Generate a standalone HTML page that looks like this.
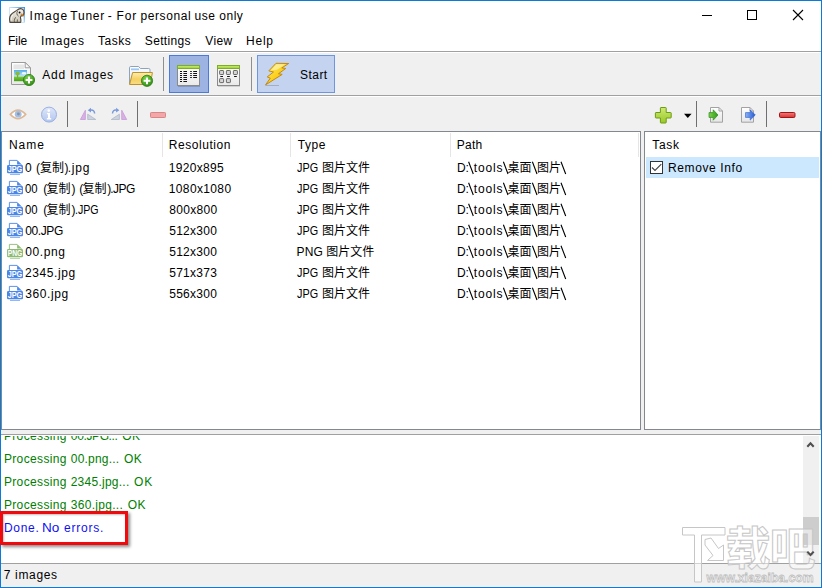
<!DOCTYPE html>
<html lang="en"><head><meta charset="utf-8"><title>Image Tuner - For personal use only</title>
<style>
*{box-sizing:border-box;margin:0;padding:0}
html,body{width:822px;height:588px;overflow:hidden;background:#fff}
body{position:relative;font-family:"Liberation Sans",sans-serif;font-size:12px;color:#000}
.abs,.t,.cj,.ic{position:absolute}
.t{white-space:pre;line-height:16px;height:16px;transform-origin:0 0}
.ck{font-family:"Liberation Sans","Noto Sans CJK SC",sans-serif;font-size:12px}
.cj{overflow:visible}
#win{position:absolute;left:0;top:0;width:822px;height:588px;border:1px solid #0c7ad8;background:#fff;overflow:hidden}
#tb1{left:1px;top:51px;width:820px;height:44px;background:#f0f0f0;border-top:1px solid #a0a0a0;box-shadow:inset 0 1px 0 #fff}
#tb2{left:1px;top:95px;width:820px;height:36px;background:#f0f0f0;border-top:1px solid #a0a0a0;box-shadow:inset 0 1px 0 #fff}
#mid{left:1px;top:131px;width:820px;height:303px;background:#f0f0f0}
#list{left:1px;top:131px;width:640px;height:299px;background:#fff;border:1px solid #828790}
#task{left:644px;top:131px;width:177px;height:299px;background:#fff;border:1px solid #828790}
#log{left:1px;top:434px;width:820px;height:130px;background:#fff;border-top:1px solid #a0a0a0;border-bottom:1px solid #a0a0a0;overflow:hidden}
#status{left:1px;top:564px;width:820px;height:23px;background:#f0f0f0}
.sep{position:absolute;width:1px;background:#8d8d8d}
.hsep{position:absolute;width:1px;top:133px;height:24px;background:#e5e5e5}
.btn{position:absolute;border:1px solid #5a86dc}
</style></head><body>
<div id="win"></div>
<div id="titlebar"><svg class="ic" style="left:9px;top:7px" width="16" height="16" viewBox="0 0 16 16"><defs><linearGradient id="tg1" x1="0" y1="0" x2="1" y2="0"><stop offset="0" stop-color="#cfe6fa"/><stop offset="1" stop-color="#3d92e4"/></linearGradient><linearGradient id="tg2" x1="0" y1="0" x2="0" y2="1"><stop offset="0" stop-color="#3d92e4"/><stop offset="1" stop-color="#bcdcf8"/></linearGradient><linearGradient id="eb" x1="0" y1="0" x2="0" y2="1"><stop offset="0" stop-color="#f3f1ea"/><stop offset="1" stop-color="#c9c3b4"/></linearGradient></defs><rect width="16" height="16" fill="#fff"/><rect width="16" height="1" fill="url(#tg1)"/><rect x="14.600" width="1.400" height="16" fill="url(#tg2)"/><rect width="1" height="16" fill="#cfe6fa"/><rect y="15" width="16" height="1" fill="#cfe6fa"/><path d="M1 15.300C.3 12.400.5 9.600 1.800 7.800C3.400 5.600 6 4.800 7.800 3.400C9.400 1.800 11.600 1.300 13.200 2C14.800 2.800 15.200 5 14.800 7L14.200 8.600L12 8.900L11.400 10.600C11.900 12.200 12 14 11.600 15.300Z" fill="url(#eb)" stroke="#4e463c" stroke-width="1.150" stroke-linejoin="round"/><path d="M5.400 15C5.100 12.800 5.600 11.200 7 10.200M8.300 15L8.400 12.400M8.600 4C7.400 5.600 7.600 8.200 9.600 9.200" fill="none" stroke="#5e564a" stroke-width=".9"/><path d="M2.200 13.600C1.900 11 2.600 9.200 4 7.900" fill="none" stroke="#fff" stroke-width="1" opacity=".8"/><circle cx="10.600" cy="5.500" r=".95" fill="#0a0a0a"/><path d="M11.700 7.400L14.700 9L14.400 7.700L12.500 6.800Z" fill="#e2871a" stroke="#cf7710" stroke-width=".4"/></svg><div id="title"><span class="t" style="left:29.59px;top:7.84px;letter-spacing:1.045px;">Image</span> <span class="t" style="left:70.33px;top:7.84px;letter-spacing:0.766px;">Tuner</span> <span class="t" style="left:107.77px;top:7.84px;">-</span> <span class="t" style="left:116.52px;top:7.84px;letter-spacing:0.842px;">For</span> <span class="t" style="left:140.53px;top:7.84px;letter-spacing:0.578px;">personal</span> <span class="t" style="left:194.52px;top:7.84px;letter-spacing:0.477px;">use</span> <span class="t" style="left:219.30px;top:7.84px;letter-spacing:0.504px;">only</span> </div><svg class="ic" style="left:696px;top:4px" width="116" height="22" viewBox="696 4 116 22" shape-rendering="crispEdges"><rect x="702" y="15" width="10" height="1" fill="#000"/><rect x="747.5" y="10.5" width="9" height="9" fill="none" stroke="#000"/><path d="M793 10 L803 20 M803 10 L793 20" stroke="#000" stroke-width="1.1" shape-rendering="geometricPrecision"/></svg></div>
<div id="menubar"><span class="t" style="left:7.92px;top:32.84px;letter-spacing:-0.009px;">File</span><span class="t" style="left:41.09px;top:32.84px;letter-spacing:0.696px;">Images</span><span class="t" style="left:97.93px;top:32.84px;letter-spacing:0.529px;">Tasks</span><span class="t" style="left:144.86px;top:32.84px;letter-spacing:0.317px;">Settings</span><span class="t" style="left:205.35px;top:32.84px;letter-spacing:0.376px;">View</span><span class="t" style="left:246.02px;top:32.84px;letter-spacing:0.767px;">Help</span></div>
<div id="tb1" class="abs"></div><svg class="ic" style="left:0;top:52px" width="822" height="44" viewBox="0 52 822 44"><defs>
<linearGradient id="pg" x1="0" y1="0" x2="0" y2="1"><stop offset="0" stop-color="#ffffff"/><stop offset="1" stop-color="#e9e9e9"/></linearGradient>
<linearGradient id="sky" x1="0" y1="0" x2="0" y2="1"><stop offset="0" stop-color="#52aeec"/><stop offset="1" stop-color="#d2ecfb"/></linearGradient>
<linearGradient id="grs" x1="0" y1="0" x2="0" y2="1"><stop offset="0" stop-color="#7ccb34"/><stop offset="1" stop-color="#45a018"/></linearGradient>
<radialGradient id="gc" cx=".4" cy=".3" r=".8"><stop offset="0" stop-color="#7ad548"/><stop offset="1" stop-color="#2a8410"/></radialGradient>
<linearGradient id="fb" x1="0" y1="0" x2="0" y2="1"><stop offset="0" stop-color="#ffffff"/><stop offset="1" stop-color="#d6e3f4"/></linearGradient>
<linearGradient id="ff" x1="0" y1="0" x2="0" y2="1"><stop offset="0" stop-color="#fdeeb8"/><stop offset=".55" stop-color="#f6d060"/><stop offset="1" stop-color="#f8dc88"/></linearGradient>
<linearGradient id="gb" x1="0" y1="0" x2="0" y2="1"><stop offset="0" stop-color="#c4ea68"/><stop offset="1" stop-color="#a4d438"/></linearGradient>
<linearGradient id="lt" x1="0" y1="0" x2="1" y2="1"><stop offset="0" stop-color="#fff47a"/><stop offset=".5" stop-color="#fbd020"/><stop offset="1" stop-color="#f0a800"/></linearGradient>
</defs>
<!-- add images -->
<path d="M11.5 62.5H25.2L30.5 67.8V84.5H11.5Z" fill="url(#pg)" stroke="#9b9b9b"/>
<path d="M25.2 62.5V67.8H30.5Z" fill="#fafafa" stroke="#9b9b9b" stroke-linejoin="round"/>
<rect x="13.5" y="64.5" width="10.5" height="4.5" fill="#e6e6e6"/>
<rect x="14" y="70" width="13" height="7.4" fill="url(#sky)"/>
<rect x="14" y="76.6" width="13" height="4.6" fill="url(#grs)"/>
<ellipse cx="24" cy="73.2" rx="2.4" ry="1.2" fill="#fff" opacity=".85"/>
<ellipse cx="17.6" cy="73.6" rx="2.3" ry="2" fill="#86bc3a"/><rect x="17.3" y="75" width=".8" height="2.4" fill="#7a8a30"/>
<circle cx="29" cy="80" r="5.6" fill="url(#gc)" stroke="#2c7a14" stroke-width=".8"/>
<path d="M28 76.6h2v2.4h2.4v2h-2.4v2.4h-2v-2.4h-2.4v-2h2.4z" fill="#fff"/>
<!-- add folder -->
<path d="M129.5 84V67.8Q129.5 66.5 130.8 66.5H138.6L140.4 68.5H148.7Q150 68.5 150 69.8V84Z" fill="url(#fb)" stroke="#8ea2bb"/>
<rect x="131" y="68.4" width="8" height="1.8" fill="#9cc8f6"/>
<path d="M132.6 72.5H152.4L150.4 84.5H129.6Z" fill="url(#ff)" stroke="#bd9226" stroke-linejoin="round"/>
<circle cx="147" cy="80.8" r="5.6" fill="url(#gc)" stroke="#2c7a14" stroke-width=".8"/>
<path d="M146 77.4h2v2.4h2.4v2h-2.4v2.4h-2v-2.4h-2.4v-2h2.4z" fill="#fff"/>
<rect x="163" y="57" width="1" height="34" fill="#8f8f8f"/>
<!-- details (selected) -->
<rect x="169.5" y="55.5" width="39" height="37" fill="#9db4e3" stroke="#4a7bdb"/>
<rect x="178" y="85.6" width="22" height="1" fill="#000" opacity=".28"/>
<rect x="177.5" y="65.5" width="22" height="20" fill="url(#pg)" stroke="#8a8a8a"/>
<rect x="177" y="65" width="23" height="4" rx=".8" fill="#7fae22"/><rect x="178" y="66" width="21" height="2" fill="url(#gb)"/>
<path d="M180 71.5h2m1.4 0h3.6M180 73.5h2m1.4 0h3.6M180 75.5h2m1.4 0h3.6M180 77.5h2m1.4 0h3.6M180 79.5h2m1.4 0h3.6M180 81.5h2m1.4 0h3.6M190.2 71.5h1.6m1.4 0h3.8M190.2 73.5h1.6m1.4 0h3.8M190.2 75.5h1.6m1.4 0h3.8M190.2 77.5h1.6m1.4 0h3.8" stroke="#111" stroke-width="1"/>
<!-- thumbnails -->
<rect x="218" y="85.6" width="22" height="1" fill="#000" opacity=".22"/>
<rect x="217.5" y="65.5" width="22" height="20" fill="url(#pg)" stroke="#8a8a8a"/>
<rect x="217" y="65" width="23" height="4" rx=".8" fill="#7fae22"/><rect x="218" y="66" width="21" height="2" fill="url(#gb)"/>
<g fill="#d6d6d6" stroke="#6a6a6a"><rect x="219.6" y="70.5" width="4" height="4" rx=".6"/><rect x="226.4" y="70.5" width="4" height="4" rx=".6"/><rect x="233.4" y="70.5" width="4" height="4" rx=".6"/><rect x="219.6" y="78.6" width="4" height="4" rx=".6"/><rect x="226.4" y="78.6" width="4" height="4" rx=".6"/></g>
<path d="M220.3 76.5h2.7M227.1 76.5h2.7M234.1 76.5h2.7" stroke="#111"/>
<rect x="251" y="57" width="1" height="34" fill="#8f8f8f"/>
<!-- start -->
<rect x="257.5" y="55.5" width="77" height="37" fill="#c4d3ef" stroke="#6c96e0"/>
<path d="M265.6 85.6H279" stroke="#8a8a8a" stroke-width=".8" opacity=".7"/>
<path d="M276 63.300L288.700 63.500L281.800 67.900L285.700 68.500L278.500 73.700L282.200 74.400L265.500 84.900L270.300 78.200L267.200 76.900L273.500 72L268.800 70.900Z" fill="url(#lt)" stroke="#c48a10" stroke-width="1" stroke-linejoin="round"/><path d="M276.600 64.300H285.500L277 69.800L271 70.300Z" fill="#fffbd0" opacity=".55"/>
</svg>
<span class="t" style="left:42.28px;top:66.84px;letter-spacing:0.757px;">Add Images</span><span class="t" style="left:299.96px;top:66.84px;letter-spacing:0.472px;">Start</span>
<div id="tb2" class="abs"></div><svg class="ic" style="left:0;top:96px" width="822" height="36" viewBox="0 96 822 36"><defs>
<linearGradient id="ig" x1="0" y1="0" x2="0" y2="1"><stop offset="0" stop-color="#e0e8f9"/><stop offset="1" stop-color="#b2c5ee"/></linearGradient>
<linearGradient id="gp" x1="0" y1="0" x2="0" y2="1"><stop offset="0" stop-color="#cdea74"/><stop offset="1" stop-color="#98c828"/></linearGradient>
<linearGradient id="ga" x1="0" y1="0" x2="1" y2="0"><stop offset="0" stop-color="#7fd24a"/><stop offset="1" stop-color="#2d9a1c"/></linearGradient>
<linearGradient id="ba" x1="0" y1="0" x2="1" y2="0"><stop offset="0" stop-color="#8ab4f6"/><stop offset="1" stop-color="#2456d2"/></linearGradient>
<linearGradient id="rm" x1="0" y1="0" x2="0" y2="1"><stop offset="0" stop-color="#f47c7c"/><stop offset="1" stop-color="#d63434"/></linearGradient>
<linearGradient id="pg2" x1="0" y1="0" x2="0" y2="1"><stop offset="0" stop-color="#ffffff"/><stop offset="1" stop-color="#e6e6e6"/></linearGradient>
</defs>
<!-- eye -->
<path d="M10.3 114.4Q18 105.8 25.7 114.4Q18 122.8 10.3 114.4Z" fill="#fff" stroke="#ddb896" stroke-width="1.6"/>
<circle cx="18.2" cy="114.2" r="3.4" fill="#a2bfe6"/><circle cx="18.4" cy="114" r="1.4" fill="#8a93a6"/>
<!-- info -->
<circle cx="49" cy="114.6" r="7.5" fill="url(#ig)" stroke="#9bb1e2"/>
<circle cx="48.8" cy="110.6" r="1.3" fill="#fff"/><path d="M47 113H50V118H51.2V119.4H46.8V118H48V114.3H47Z" fill="#fff"/>
<rect x="67" y="101" width="1" height="26" fill="#6f6f6f"/>
<!-- flip L -->
<path d="M80.400 119.500H85.400V110.200Z" fill="#d9afe6" stroke="#c79ad8" stroke-width=".8"/><path d="M87.700 119.500H95.800L87.700 114.200Z" fill="#cbd3de" stroke="#aeb8c8" stroke-width=".8"/>
<path d="M94.6 113.6Q94.6 109.6 90.4 110.2" fill="none" stroke="#7a9adc" stroke-width="1.5"/><path d="M87.8 110.2L91 107.8V112.6Z" fill="#7a9adc"/>
<!-- flip R -->
<path d="M126.700 119.500H121.700V110.200Z" fill="#d9afe6" stroke="#c79ad8" stroke-width=".8"/><path d="M119.400 119.500H111.300L119.400 114.200Z" fill="#cbd3de" stroke="#aeb8c8" stroke-width=".8"/>
<path d="M112.5 113.6Q112.5 109.6 116.7 110.2" fill="none" stroke="#7a9adc" stroke-width="1.5"/><path d="M119.3 110.2L116.1 107.8V112.6Z" fill="#7a9adc"/>
<rect x="137" y="101" width="1" height="26" fill="#6f6f6f"/>
<rect x="150.5" y="112.5" width="15" height="5" rx=".8" fill="#f2a8a8" stroke="#d98686"/>
<!-- right group -->
<path d="M661 107.5h4.6q.6 0 .6.6v4.4h4.4q.6 0 .6.6v4.3q0 .6-.6.6h-4.4v4.4q0 .6-.6.6h-4.6q-.6 0-.6-.6v-4.4h-4.4q-.6 0-.6-.6v-4.3q0-.6.6-.6h4.400v-4.400q0-.6.6-.6z" fill="url(#gp)" stroke="#6c9c10"/>
<path d="M684 113.8h7.6l-3.800 4.200z" fill="#000"/>
<rect x="696" y="101" width="1" height="26" fill="#6f6f6f"/>
<path d="M710.500 107.500H719L722.500 111V122.200H710.500Z" fill="url(#pg2)" stroke="#a2a2a2"/><path d="M719 107.500V111H722.500" fill="none" stroke="#a2a2a2"/>
<path d="M709 112.600H713.200V109.800L718 115L713.200 120.200V117.400H709Z" fill="url(#ga)" stroke="#2e8c1c" stroke-width=".7"/>
<path d="M741.500 107.500H750L753.500 111V122.200H741.500Z" fill="url(#pg2)" stroke="#a2a2a2"/><path d="M750 107.500V111H753.500" fill="none" stroke="#a2a2a2"/>
<path d="M745.500 112.600H750.200V109.900L755.300 115L750.200 120.100V117.400H745.500Z" fill="url(#ba)" stroke="#2c5cd0" stroke-width=".6"/>
<rect x="766" y="101" width="1" height="26" fill="#6f6f6f"/>
<rect x="779.500" y="112.500" width="15.500" height="5" rx="1.200" fill="url(#rm)" stroke="#a41414"/>
</svg>

<div id="mid" class="abs"></div><div id="list" class="abs"></div><div class="hsep" style="left:162px"></div><div class="hsep" style="left:290px"></div><div class="hsep" style="left:450px"></div><div class="hsep" style="left:638px"></div><span class="t" style="left:8.92px;top:136.84px;letter-spacing:1.001px;">Name</span><span class="t" style="left:168.82px;top:136.84px;letter-spacing:0.551px;">Resolution</span><span class="t" style="left:297.73px;top:136.84px;letter-spacing:0.562px;">Type</span><span class="t" style="left:456.82px;top:136.84px;letter-spacing:0.259px;">Path</span><div class="row"><svg class="ic" style="left:6px;top:159px" width="18" height="16" viewBox="0 0 18 16"><path d="M3.400 6V1.400h7.700l4 4v.600" fill="none" stroke="#4a86e8" stroke-width=".9"/><path d="M4 15.400h10" fill="none" stroke="#4a86e8" stroke-width=".9" opacity=".75"/><path d="M11.100 1.400v4h4z" fill="#4a86e8"/><rect x="1" y="6" width="16" height="8.200" rx="1.300" fill="#4a86e8"/><text x="1.700" y="13.250" font-family="Liberation Sans,sans-serif" font-weight="bold" font-size="8.800" fill="#fff" textLength="14.600" lengthAdjust="spacingAndGlyphs">JPG</text></svg><span class="t" style="left:25.03px;top:159.84px;">0</span><span class="t" style="left:36.06px;top:159.84px;">(</span><span class="t ck" style="left:40.00px;top:159.84px;">复制</span><span class="t" style="left:64.43px;top:159.84px;">)</span><span class="t" style="left:67.70px;top:159.84px;letter-spacing:0.837px;">.jpg</span><span class="t" style="left:168.79px;top:159.84px;letter-spacing:0.328px;">1920x895</span><span class="t" style="left:297.11px;top:159.84px;transform:scaleX(0.9032);">JPG</span><span class="t ck" style="left:322.00px;top:159.84px;">图片文件</span><span class="t" style="left:456.92px;top:159.84px;letter-spacing:-0.120px;">D:</span><span class="t" style="left:473.82px;top:159.84px;letter-spacing:0.864px;">tools</span><span class="t ck" style="left:507.50px;top:159.84px;">桌面</span><span class="t ck" style="left:537.00px;top:159.84px;">图片</span><svg class="ic" style="left:466px;top:161px" width="102" height="14" viewBox="466 0 102 14"><path d="M468.600 .700L473.300 13M503.400 .700L508 13M532.400 .700L537 13M561 .700L565.700 13" fill="none" stroke="#000" stroke-width="1.100"/></svg></div>
<div class="row"><svg class="ic" style="left:6px;top:180px" width="18" height="16" viewBox="0 0 18 16"><path d="M3.400 6V1.400h7.700l4 4v.600" fill="none" stroke="#4a86e8" stroke-width=".9"/><path d="M4 15.400h10" fill="none" stroke="#4a86e8" stroke-width=".9" opacity=".75"/><path d="M11.100 1.400v4h4z" fill="#4a86e8"/><rect x="1" y="6" width="16" height="8.200" rx="1.300" fill="#4a86e8"/><text x="1.700" y="13.250" font-family="Liberation Sans,sans-serif" font-weight="bold" font-size="8.800" fill="#fff" textLength="14.600" lengthAdjust="spacingAndGlyphs">JPG</text></svg><span class="t" style="left:25.13px;top:180.84px;transform:scaleX(0.9460);">00</span><span class="t" style="left:43.16px;top:180.84px;">(</span><span class="t ck" style="left:46.60px;top:180.84px;">复制</span><span class="t" style="left:71.53px;top:180.84px;">)</span><span class="t" style="left:79.36px;top:180.84px;">(</span><span class="t ck" style="left:82.60px;top:180.84px;">复制</span><span class="t" style="left:107.33px;top:180.84px;">)</span><span class="t" style="left:110.20px;top:180.84px;letter-spacing:-0.527px;">.JPG</span><span class="t" style="left:168.79px;top:180.84px;letter-spacing:0.362px;">1080x1080</span><span class="t" style="left:297.11px;top:180.84px;transform:scaleX(0.9032);">JPG</span><span class="t ck" style="left:322.00px;top:180.84px;">图片文件</span><span class="t" style="left:456.92px;top:180.84px;letter-spacing:-0.120px;">D:</span><span class="t" style="left:473.82px;top:180.84px;letter-spacing:0.864px;">tools</span><span class="t ck" style="left:507.50px;top:180.84px;">桌面</span><span class="t ck" style="left:537.00px;top:180.84px;">图片</span><svg class="ic" style="left:466px;top:182px" width="102" height="14" viewBox="466 0 102 14"><path d="M468.600 .700L473.300 13M503.400 .700L508 13M532.400 .700L537 13M561 .700L565.700 13" fill="none" stroke="#000" stroke-width="1.100"/></svg></div>
<div class="row"><svg class="ic" style="left:6px;top:201px" width="18" height="16" viewBox="0 0 18 16"><path d="M3.400 6V1.400h7.700l4 4v.600" fill="none" stroke="#4a86e8" stroke-width=".9"/><path d="M4 15.400h10" fill="none" stroke="#4a86e8" stroke-width=".9" opacity=".75"/><path d="M11.100 1.400v4h4z" fill="#4a86e8"/><rect x="1" y="6" width="16" height="8.200" rx="1.300" fill="#4a86e8"/><text x="1.700" y="13.250" font-family="Liberation Sans,sans-serif" font-weight="bold" font-size="8.800" fill="#fff" textLength="14.600" lengthAdjust="spacingAndGlyphs">JPG</text></svg><span class="t" style="left:25.13px;top:201.84px;transform:scaleX(0.9460);">00</span><span class="t" style="left:43.16px;top:201.84px;">(</span><span class="t ck" style="left:46.60px;top:201.84px;">复制</span><span class="t" style="left:71.53px;top:201.84px;">)</span><span class="t" style="left:75.20px;top:201.84px;transform:scaleX(0.8845);">.JPG</span><span class="t" style="left:169.18px;top:201.84px;letter-spacing:0.341px;">800x800</span><span class="t" style="left:297.11px;top:201.84px;transform:scaleX(0.9032);">JPG</span><span class="t ck" style="left:322.00px;top:201.84px;">图片文件</span><span class="t" style="left:456.92px;top:201.84px;letter-spacing:-0.120px;">D:</span><span class="t" style="left:473.82px;top:201.84px;letter-spacing:0.864px;">tools</span><span class="t ck" style="left:507.50px;top:201.84px;">桌面</span><span class="t ck" style="left:537.00px;top:201.84px;">图片</span><svg class="ic" style="left:466px;top:203px" width="102" height="14" viewBox="466 0 102 14"><path d="M468.600 .700L473.300 13M503.400 .700L508 13M532.400 .700L537 13M561 .700L565.700 13" fill="none" stroke="#000" stroke-width="1.100"/></svg></div>
<div class="row"><svg class="ic" style="left:6px;top:222px" width="18" height="16" viewBox="0 0 18 16"><path d="M3.400 6V1.400h7.700l4 4v.600" fill="none" stroke="#4a86e8" stroke-width=".9"/><path d="M4 15.400h10" fill="none" stroke="#4a86e8" stroke-width=".9" opacity=".75"/><path d="M11.100 1.400v4h4z" fill="#4a86e8"/><rect x="1" y="6" width="16" height="8.200" rx="1.300" fill="#4a86e8"/><text x="1.700" y="13.250" font-family="Liberation Sans,sans-serif" font-weight="bold" font-size="8.800" fill="#fff" textLength="14.600" lengthAdjust="spacingAndGlyphs">JPG</text></svg><span class="t" style="left:25.13px;top:222.84px;letter-spacing:-0.373px;">00.JPG</span><span class="t" style="left:169.22px;top:222.84px;letter-spacing:0.267px;">512x300</span><span class="t" style="left:297.11px;top:222.84px;transform:scaleX(0.9032);">JPG</span><span class="t ck" style="left:322.00px;top:222.84px;">图片文件</span><span class="t" style="left:456.92px;top:222.84px;letter-spacing:-0.120px;">D:</span><span class="t" style="left:473.82px;top:222.84px;letter-spacing:0.864px;">tools</span><span class="t ck" style="left:507.50px;top:222.84px;">桌面</span><span class="t ck" style="left:537.00px;top:222.84px;">图片</span><svg class="ic" style="left:466px;top:224px" width="102" height="14" viewBox="466 0 102 14"><path d="M468.600 .700L473.300 13M503.400 .700L508 13M532.400 .700L537 13M561 .700L565.700 13" fill="none" stroke="#000" stroke-width="1.100"/></svg></div>
<div class="row"><svg class="ic" style="left:6px;top:243px" width="18" height="16" viewBox="0 0 18 16"><path d="M3.400 6V1.400h7.700l4 4v.600" fill="none" stroke="#8dba72" stroke-width=".9"/><path d="M4 15.400h10" fill="none" stroke="#8dba72" stroke-width=".9" opacity=".75"/><path d="M11.100 1.400v4h4z" fill="#8dba72"/><rect x="1" y="6" width="16" height="8.200" rx="1.300" fill="#8dba72"/><text x="1.700" y="13.250" font-family="Liberation Sans,sans-serif" font-weight="bold" font-size="8.800" fill="#fff" textLength="14.600" lengthAdjust="spacingAndGlyphs">PNG</text></svg><span class="t" style="left:25.13px;top:243.84px;letter-spacing:0.628px;">00.png</span><span class="t" style="left:169.22px;top:243.84px;letter-spacing:0.267px;">512x300</span><span class="t" style="left:296.62px;top:243.84px;letter-spacing:0.133px;">PNG</span><span class="t ck" style="left:326.20px;top:243.84px;">图片文件</span><span class="t" style="left:456.92px;top:243.84px;letter-spacing:-0.120px;">D:</span><span class="t" style="left:473.82px;top:243.84px;letter-spacing:0.864px;">tools</span><span class="t ck" style="left:507.50px;top:243.84px;">桌面</span><span class="t ck" style="left:537.00px;top:243.84px;">图片</span><svg class="ic" style="left:466px;top:245px" width="102" height="14" viewBox="466 0 102 14"><path d="M468.600 .700L473.300 13M503.400 .700L508 13M532.400 .700L537 13M561 .700L565.700 13" fill="none" stroke="#000" stroke-width="1.100"/></svg></div>
<div class="row"><svg class="ic" style="left:6px;top:264px" width="18" height="16" viewBox="0 0 18 16"><path d="M3.400 6V1.400h7.700l4 4v.600" fill="none" stroke="#4a86e8" stroke-width=".9"/><path d="M4 15.400h10" fill="none" stroke="#4a86e8" stroke-width=".9" opacity=".75"/><path d="M11.100 1.400v4h4z" fill="#4a86e8"/><rect x="1" y="6" width="16" height="8.200" rx="1.300" fill="#4a86e8"/><text x="1.700" y="13.250" font-family="Liberation Sans,sans-serif" font-weight="bold" font-size="8.800" fill="#fff" textLength="14.600" lengthAdjust="spacingAndGlyphs">JPG</text></svg><span class="t" style="left:25.00px;top:264.84px;letter-spacing:0.604px;">2345.jpg</span><span class="t" style="left:169.22px;top:264.84px;letter-spacing:0.277px;">571x373</span><span class="t" style="left:297.11px;top:264.84px;transform:scaleX(0.9032);">JPG</span><span class="t ck" style="left:322.00px;top:264.84px;">图片文件</span><span class="t" style="left:456.92px;top:264.84px;letter-spacing:-0.120px;">D:</span><span class="t" style="left:473.82px;top:264.84px;letter-spacing:0.864px;">tools</span><span class="t ck" style="left:507.50px;top:264.84px;">桌面</span><span class="t ck" style="left:537.00px;top:264.84px;">图片</span><svg class="ic" style="left:466px;top:266px" width="102" height="14" viewBox="466 0 102 14"><path d="M468.600 .700L473.300 13M503.400 .700L508 13M532.400 .700L537 13M561 .700L565.700 13" fill="none" stroke="#000" stroke-width="1.100"/></svg></div>
<div class="row"><svg class="ic" style="left:6px;top:285px" width="18" height="16" viewBox="0 0 18 16"><path d="M3.400 6V1.400h7.700l4 4v.600" fill="none" stroke="#4a86e8" stroke-width=".9"/><path d="M4 15.400h10" fill="none" stroke="#4a86e8" stroke-width=".9" opacity=".75"/><path d="M11.100 1.400v4h4z" fill="#4a86e8"/><rect x="1" y="6" width="16" height="8.200" rx="1.300" fill="#4a86e8"/><text x="1.700" y="13.250" font-family="Liberation Sans,sans-serif" font-weight="bold" font-size="8.800" fill="#fff" textLength="14.600" lengthAdjust="spacingAndGlyphs">JPG</text></svg><span class="t" style="left:25.14px;top:285.84px;letter-spacing:0.626px;">360.jpg</span><span class="t" style="left:169.22px;top:285.84px;letter-spacing:0.267px;">556x300</span><span class="t" style="left:297.11px;top:285.84px;transform:scaleX(0.9032);">JPG</span><span class="t ck" style="left:322.00px;top:285.84px;">图片文件</span><span class="t" style="left:456.92px;top:285.84px;letter-spacing:-0.120px;">D:</span><span class="t" style="left:473.82px;top:285.84px;letter-spacing:0.864px;">tools</span><span class="t ck" style="left:507.50px;top:285.84px;">桌面</span><span class="t ck" style="left:537.00px;top:285.84px;">图片</span><svg class="ic" style="left:466px;top:287px" width="102" height="14" viewBox="466 0 102 14"><path d="M468.600 .700L473.300 13M503.400 .700L508 13M532.400 .700L537 13M561 .700L565.700 13" fill="none" stroke="#000" stroke-width="1.100"/></svg></div>
<div id="task" class="abs"></div><span class="t" style="left:652.23px;top:136.84px;letter-spacing:0.688px;">Task</span><div class="abs" style="left:646px;top:157px;width:173px;height:21px;background:#cce8ff"></div><svg class="ic" style="left:650px;top:161px" width="13" height="13" viewBox="0 0 13 13"><rect x=".5" y=".5" width="12" height="12" fill="#fff" stroke="#333"/><path d="M2 6.500L5 9.500L11.300 3.200" fill="none" stroke="#444" stroke-width="1.150"/></svg><span class="t" style="left:668.02px;top:159.84px;letter-spacing:0.614px;">Remove Info</span>
<div id="log" class="abs"></div><div class="abs" style="left:1px;top:436px;width:800px;height:127px;overflow:hidden"><div class="abs" style="left:-1px;top:-436px;width:822px;height:588px"><span class="t" style="left:3.92px;top:427.84px;color:#008000;letter-spacing:0.354px;">Processing</span><span class="t" style="left:70.83px;top:427.84px;color:#008000;letter-spacing:-0.371px;">00.JPG...</span><span class="t" style="left:122.33px;top:427.84px;color:#008000;letter-spacing:0.359px;">OK</span><span class="t" style="left:3.92px;top:450.84px;color:#008000;letter-spacing:0.354px;">Processing</span><span class="t" style="left:70.83px;top:450.84px;color:#008000;letter-spacing:0.193px;">00.png...</span><span class="t" style="left:124.03px;top:450.84px;color:#008000;letter-spacing:0.359px;">OK</span><span class="t" style="left:3.92px;top:473.84px;color:#008000;letter-spacing:0.354px;">Processing</span><span class="t" style="left:70.70px;top:473.84px;color:#008000;letter-spacing:0.255px;">2345.jpg...</span><span class="t" style="left:133.93px;top:473.84px;color:#008000;letter-spacing:0.959px;">OK</span><span class="t" style="left:3.92px;top:496.84px;color:#008000;letter-spacing:0.354px;">Processing</span><span class="t" style="left:70.84px;top:496.84px;color:#008000;letter-spacing:0.286px;">360.jpg...</span><span class="t" style="left:127.63px;top:496.84px;color:#008000;letter-spacing:0.459px;">OK</span><span class="t" style="left:3.92px;top:519.84px;color:#1010f0;letter-spacing:0.712px;">Done.</span><span class="t" style="left:42.32px;top:519.84px;color:#1010f0;transform:scaleX(1.1267);">No</span><span class="t" style="left:63.99px;top:519.84px;color:#1010f0;letter-spacing:0.772px;">errors.</span></div></div><div class="abs" style="left:803px;top:436px;width:16px;height:127px;background:#f0f0f0"></div><div class="abs" style="left:803px;top:517px;width:16px;height:28px;background:#cdcdcd"></div>
<div id="status" class="abs"></div><span class="t" style="left:3.68px;top:567.44px;letter-spacing:0.678px;">7 images</span>
<svg class="ic" style="left:676px;top:520px" width="146" height="68" viewBox="676 520 146 68"><g fill="#fff" fill-opacity=".5" stroke="#c6c6c6"><path d="M682.500 527.500H725V535H701.500V582H694.500V535H682.500Z"/><path d="M705 539.500L711 538L718.500 548.500L723.500 545V560.500H707.500L713 555.500L705 545Z"/></g><g fill="#fff" fill-opacity=".5" stroke="#c6c6c6" stroke-width="1" font-family="Liberation Sans,Noto Sans CJK SC,sans-serif" font-weight="bold"><text x="725.500" y="564.500" font-size="45">载</text><text x="769.500" y="564.500" font-size="46">吧</text></g><text x="706.500" y="582.300" font-family="Liberation Sans,sans-serif" font-weight="bold" font-size="13.500" fill="#fff" fill-opacity=".7" stroke="#bdbdbd" stroke-width=".8" textLength="107" lengthAdjust="spacingAndGlyphs">www.xiazaiba.com</text></svg>
<svg class="ic" style="left:803px;top:436px" width="16" height="127" viewBox="0 0 16 127"><path d="M4.300 10.800L7.500 7.400L10.700 10.800M4.300 115.600L7.500 119L10.700 115.600" fill="none" stroke="#505050" stroke-width="2.100"/></svg><div class="abs" style="left:0;top:0;width:822px;height:588px;border:1px solid #0c7ad8;pointer-events:none"></div><div class="abs" style="left:0;top:511px;width:128px;height:34px;border:3px solid #f00a0e;box-shadow:2px 2px 3px rgba(0,0,0,.45), inset 1px 1px 2px rgba(0,0,0,.25)"></div></body></html>
